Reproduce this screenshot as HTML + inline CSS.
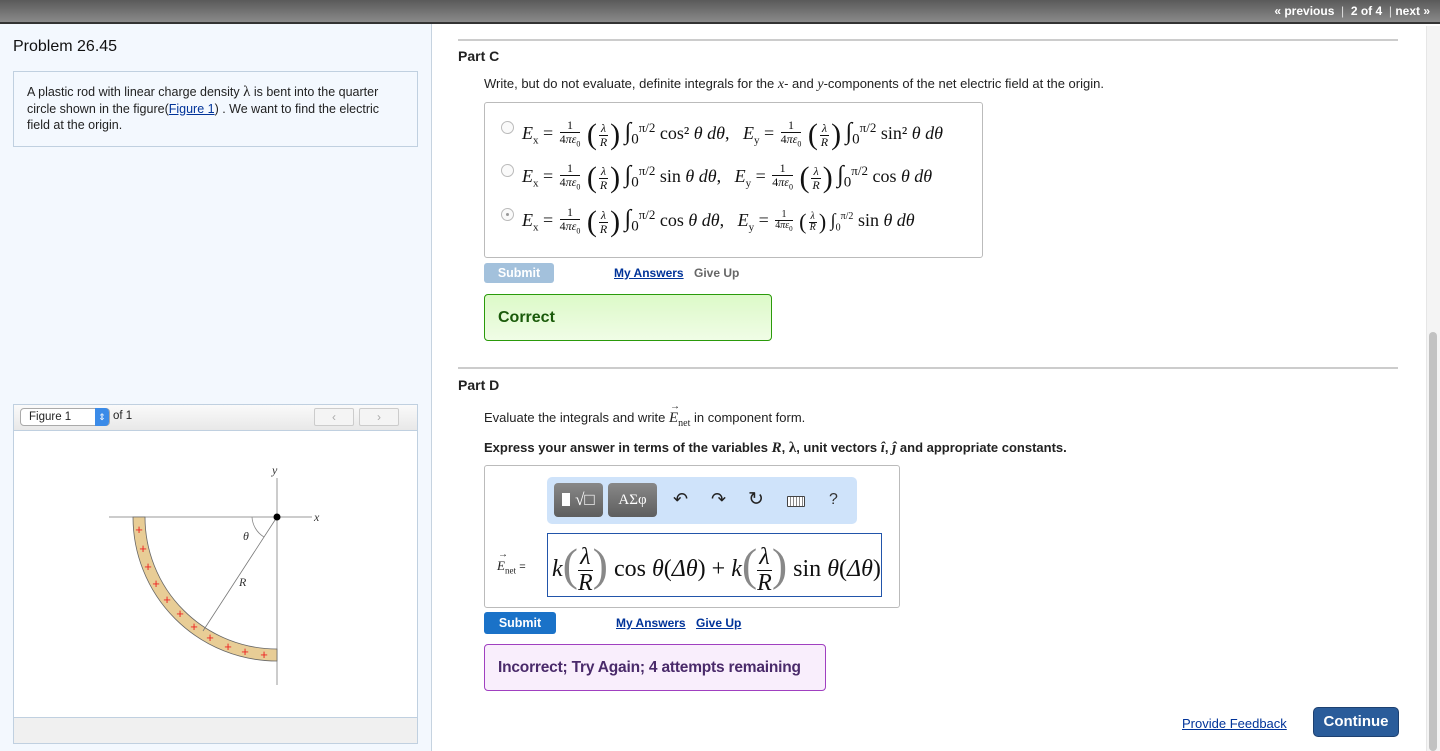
<!DOCTYPE html>
<html><head><meta charset="utf-8"><style>
*{box-sizing:border-box;margin:0;padding:0}
body{width:1440px;height:751px;overflow:hidden;position:relative;font-family:"Liberation Sans",Arial,sans-serif;background:#fff;color:#222}
.abs{position:absolute}
.top{left:0;top:0;width:1440px;height:24px;background:linear-gradient(#5a5a5a,#8a8a8a);border-bottom:2px solid #333}
.nav{right:10px;top:4px;color:#fff;font-size:12px;font-weight:bold}
.left{left:0;top:24px;width:432px;height:727px;background:#f3f8fe;border-right:1px solid #c6d3e0}
.serif{font-family:"Liberation Serif","DejaVu Serif",serif}
.m{font-family:"Liberation Serif",serif;font-size:18px;color:#111;white-space:nowrap}
.fr{display:inline-block;vertical-align:middle;text-align:center;font-size:12px;line-height:13px;margin:0 2px}
.fr span{display:block}
.fr span:first-child{border-bottom:1px solid #111;padding:0 2px}
.p{font-size:30px;vertical-align:middle;font-weight:100}
.i{font-size:24px}
.rule{height:2px;background:#ccc}
.lnk{color:#003399;text-decoration:underline;font-weight:bold;font-size:12px}
.radio{width:13px;height:13px;border-radius:50%;border:1px solid #bbb;background:#fafafa}
.vec{position:relative;font-style:italic}
.vec:before{content:"→";position:absolute;left:1px;top:-9px;font-size:10px;font-style:normal}
</style></head><body>
<div class="abs top"></div>
<div class="abs nav">« previous &nbsp;<span style="font-weight:normal;color:#ddd">|</span>&nbsp; 2 of 4 &nbsp;<span style="font-weight:normal;color:#ddd">|</span>&nbsp;next »</div>
<div class="abs left"></div>
<div class="abs" style="left:13px;top:38px;font-size:16px;color:#111">Problem 26.45</div>
<div class="abs" style="left:13px;top:71px;width:405px;height:76px;border:1px solid #c0d0e0;background:#f3f8fe;padding:12px 13px;font-size:12.5px;line-height:16.5px;color:#222">A plastic rod with linear charge density <span class="serif" style="font-size:15px">λ</span> is bent into the quarter circle shown in the figure(<span style="color:#003399;text-decoration:underline">Figure 1</span>) . We want to find the electric field at the origin.</div>

<div class="abs" style="left:13px;top:404px;width:405px;height:340px;border:1px solid #c0d0e0;background:#fff"></div>
<div class="abs" style="left:14px;top:405px;width:403px;height:26px;background:linear-gradient(#fafafa,#e8e8e8);border-bottom:1px solid #c0d0e0"></div>
<div class="abs" style="left:20px;top:408px;width:90px;height:18px;border:1px solid #aaa;border-radius:4px;background:#fff;font-size:11.5px;padding:2px 8px">Figure 1</div>
<div class="abs" style="left:95px;top:408px;width:14px;height:18px;background:#3b8be8;border-radius:0 4px 4px 0;color:#fff;font-size:9px;text-align:center;line-height:18px">⇕</div>
<div class="abs" style="left:113px;top:410px;font-size:11.5px">of 1</div>
<div class="abs" style="left:314px;top:408px;width:40px;height:18px;border:1px solid #ccc;border-radius:2px;background:#f4f4f4;color:#aaa;font-size:12px;text-align:center;line-height:16px">‹</div>
<div class="abs" style="left:359px;top:408px;width:40px;height:18px;border:1px solid #ccc;border-radius:2px;background:#f4f4f4;color:#aaa;font-size:12px;text-align:center;line-height:16px">›</div>
<div class="abs" style="left:14px;top:717px;width:403px;height:26px;background:#f0f0f0;border-top:1px solid #c0d0e0"></div>

<svg class="abs" style="left:100px;top:455px" width="240" height="240" viewBox="100 455 240 240">
<line x1="277" y1="478" x2="277" y2="685" stroke="#999" stroke-width="1"/>
<line x1="109" y1="517" x2="312" y2="517" stroke="#999" stroke-width="1"/>
<path d="M133 517 A144 144 0 0 0 277 661 L277 649 A132 132 0 0 1 145 517 Z" fill="#e8cd96" stroke="#666" stroke-width="0.8"/>
<line x1="277" y1="517" x2="203" y2="631" stroke="#777" stroke-width="0.8"/>
<path d="M252 517 A25 25 0 0 0 264 537" fill="none" stroke="#888" stroke-width="0.8"/>
<circle cx="277" cy="517" r="3.5" fill="#000"/>
<g fill="#e22" font-size="13" font-family="Liberation Sans" text-anchor="middle">
<text x="139" y="534">+</text><text x="143" y="553">+</text><text x="148" y="571">+</text><text x="156" y="588">+</text><text x="167" y="604">+</text><text x="180" y="618">+</text><text x="194" y="631">+</text><text x="210" y="642">+</text><text x="228" y="651">+</text><text x="245" y="656">+</text><text x="264" y="659">+</text></g>
<g font-family="Liberation Serif" font-style="italic" font-size="12" fill="#333">
<text x="272" y="474">y</text><text x="314" y="521">x</text><text x="243" y="540">θ</text><text x="239" y="586">R</text></g>
</svg>

<div class="abs rule" style="left:458px;top:39px;width:940px"></div>
<div class="abs" style="left:458px;top:48px;font-size:14px;font-weight:bold">Part C</div>
<div class="abs" style="left:484px;top:76px;font-size:13px">Write, but do not evaluate, definite integrals for the <i class="serif" style="font-size:14px">x</i>- and <i class="serif" style="font-size:14px">y</i>-components of the net electric field at the origin.</div>
<div class="abs" style="left:484px;top:102px;width:499px;height:156px;border:1px solid #bbb;border-radius:3px"></div>

<div class="abs radio" style="left:501px;top:121px"></div>
<div class="abs radio" style="left:501px;top:164px"></div>
<div class="abs radio" style="left:501px;top:208px"><div style="width:3px;height:3px;background:#999;border-radius:50%;margin:4px"></div></div>

<div class="abs m" style="left:522px;top:118px"><i>E</i><sub style="font-size:11px">x</sub> = <span class="fr"><span>1</span><span>4<i>πε</i><sub style="font-size:8px">0</sub></span></span> <span class="p">(</span><span class="fr"><span><i>λ</i></span><span><i>R</i></span></span><span class="p">)</span> <span class="i">∫</span><sub>0</sub><sup style="font-size:13px">π/2</sup> cos² <i>θ dθ</i>, &nbsp;&nbsp;<i>E</i><sub style="font-size:11px">y</sub> = <span class="fr"><span>1</span><span>4<i>πε</i><sub style="font-size:8px">0</sub></span></span> <span class="p">(</span><span class="fr"><span><i>λ</i></span><span><i>R</i></span></span><span class="p">)</span> <span class="i">∫</span><sub>0</sub><sup style="font-size:13px">π/2</sup> sin² <i>θ dθ</i></div>
<div class="abs m" style="left:522px;top:161px"><i>E</i><sub style="font-size:11px">x</sub> = <span class="fr"><span>1</span><span>4<i>πε</i><sub style="font-size:8px">0</sub></span></span> <span class="p">(</span><span class="fr"><span><i>λ</i></span><span><i>R</i></span></span><span class="p">)</span> <span class="i">∫</span><sub>0</sub><sup style="font-size:13px">π/2</sup> sin <i>θ dθ</i>, &nbsp;&nbsp;<i>E</i><sub style="font-size:11px">y</sub> = <span class="fr"><span>1</span><span>4<i>πε</i><sub style="font-size:8px">0</sub></span></span> <span class="p">(</span><span class="fr"><span><i>λ</i></span><span><i>R</i></span></span><span class="p">)</span> <span class="i">∫</span><sub>0</sub><sup style="font-size:13px">π/2</sup> cos <i>θ dθ</i></div>
<div class="abs m" style="left:522px;top:205px"><i>E</i><sub style="font-size:11px">x</sub> = <span class="fr"><span>1</span><span>4<i>πε</i><sub style="font-size:8px">0</sub></span></span> <span class="p">(</span><span class="fr"><span><i>λ</i></span><span><i>R</i></span></span><span class="p">)</span> <span class="i">∫</span><sub>0</sub><sup style="font-size:13px">π/2</sup> cos <i>θ dθ</i>, &nbsp;&nbsp;<i>E</i><sub style="font-size:11px">y</sub> = <span class="fr" style="font-size:10px;line-height:10px"><span>1</span><span>4<i>πε</i><sub style="font-size:7px">0</sub></span></span> <span class="p" style="font-size:22px">(</span><span class="fr" style="font-size:10px;line-height:10px"><span><i>λ</i></span><span><i>R</i></span></span><span class="p" style="font-size:22px">)</span> <span style="font-size:18px">∫</span><sub style="font-size:10px">0</sub><sup style="font-size:10px">π/2</sup> sin <i>θ dθ</i></div>

<div class="abs" style="left:484px;top:263px;width:70px;height:20px;background:#a3c1dc;border-radius:3px;color:#fff;font-weight:bold;font-size:12.5px;text-align:center;line-height:20px">Submit</div>
<div class="abs lnk" style="left:614px;top:266px">My Answers</div>
<div class="abs" style="left:694px;top:266px;font-size:12px;font-weight:bold;color:#666">Give Up</div>
<div class="abs" style="left:484px;top:294px;width:288px;height:47px;border:1px solid #2a9a0a;border-radius:4px;background:linear-gradient(#dcf9c8,#f0fde6);padding:14px 13px;font-size:16px;font-weight:bold;color:#1a5a0a">Correct</div>

<div class="abs rule" style="left:458px;top:367px;width:940px"></div>
<div class="abs" style="left:458px;top:377px;font-size:14px;font-weight:bold">Part D</div>
<div class="abs" style="left:484px;top:410px;font-size:13px">Evaluate the integrals and write <span class="serif" style="font-size:15px"><span class="vec">E</span><sub style="font-size:10px">net</sub></span> in component form.</div>
<div class="abs" style="left:484px;top:440px;font-size:13px;font-weight:bold">Express your answer in terms of the variables <i class="serif" style="font-size:15px">R</i>, <span class="serif" style="font-size:15px">λ</span>, unit vectors <i class="serif" style="font-size:15px">î</i>, <i class="serif" style="font-size:15px">ĵ</i> and appropriate constants.</div>
<div class="abs" style="left:484px;top:465px;width:416px;height:143px;border:1px solid #bbb;border-radius:3px"></div>
<div class="abs" style="left:547px;top:477px;width:310px;height:47px;background:#cfe3fa;border-radius:5px"></div>
<div class="abs" style="left:554px;top:483px;width:49px;height:34px;background:linear-gradient(#888,#5e5e5e);border-radius:4px;color:#fff;font-size:17px;line-height:34px;text-align:center"><span style="display:inline-block;width:8px;height:13px;background:#fff;vertical-align:-1px"></span> <span class="serif">√□</span></div>
<div class="abs serif" style="left:608px;top:483px;width:49px;height:34px;background:linear-gradient(#888,#5e5e5e);border-radius:4px;color:#fff;font-size:15px;line-height:34px;text-align:center">ΑΣφ</div>
<div class="abs" style="left:673px;top:489px;font-size:18px;color:#222">↶</div>
<div class="abs" style="left:711px;top:489px;font-size:18px;color:#222">↷</div>
<div class="abs" style="left:748px;top:488px;font-size:19px;color:#222">↻</div>
<div class="abs" style="left:787px;top:496px;width:18px;height:11px;border:1px solid #444;border-radius:1px;background:repeating-linear-gradient(90deg,#fff 0 2px,#888 2px 3px)"></div>
<div class="abs" style="left:829px;top:491px;font-size:16px;color:#333">?</div>
<div class="abs serif" style="left:497px;top:558px;font-size:13px;white-space:nowrap"><span class="vec">E</span><sub style="font-size:9px">net</sub> <span style="font-family:Liberation Sans;font-size:11px">=</span></div>
<div class="abs" style="left:547px;top:533px;width:335px;height:64px;border:1px solid #2255aa"></div>
<div class="abs m" style="left:552px;top:537px;font-size:24px;line-height:56px"><i>k</i><span style="font-size:46px;color:#888;vertical-align:-4px">(</span><span class="fr" style="font-size:24px;line-height:25px;margin:0"><span><i>λ</i></span><span><i>R</i></span></span><span style="font-size:46px;color:#888;vertical-align:-4px">)</span> cos <i>θ</i>(<i>Δθ</i>) + <i>k</i><span style="font-size:46px;color:#888;vertical-align:-4px">(</span><span class="fr" style="font-size:24px;line-height:25px;margin:0"><span><i>λ</i></span><span><i>R</i></span></span><span style="font-size:46px;color:#888;vertical-align:-4px">)</span> sin <i>θ</i>(<i>Δθ</i>)</div>

<div class="abs" style="left:484px;top:612px;width:72px;height:22px;background:#1a72c8;border-radius:3px;color:#fff;font-weight:bold;font-size:12.5px;text-align:center;line-height:22px">Submit</div>
<div class="abs lnk" style="left:616px;top:616px">My Answers</div>
<div class="abs lnk" style="left:696px;top:616px">Give Up</div>
<div class="abs" style="left:484px;top:644px;width:342px;height:47px;border:1px solid #a040c0;border-radius:4px;background:#f9eefc;padding:14px 13px;font-size:15.5px;font-weight:bold;color:#4a2a6a;white-space:nowrap;letter-spacing:-0.2px">Incorrect; Try Again; 4 attempts remaining</div>

<div class="abs" style="left:1182px;top:716px;font-size:13px;color:#003399;text-decoration:underline">Provide Feedback</div>
<div class="abs" style="left:1313px;top:707px;width:86px;height:30px;background:#2a5c9a;border:1px solid #1d4070;border-radius:5px;color:#fff;font-weight:bold;font-size:15px;text-align:center;line-height:28px">Continue</div>

<div class="abs" style="left:1426px;top:26px;width:14px;height:725px;background:#f4f4f4;border-left:1px solid #e6e6e6"></div>
<div class="abs" style="left:1429px;top:332px;width:8px;height:419px;background:#c2c2c2;border-radius:4px"></div>
</body></html>
